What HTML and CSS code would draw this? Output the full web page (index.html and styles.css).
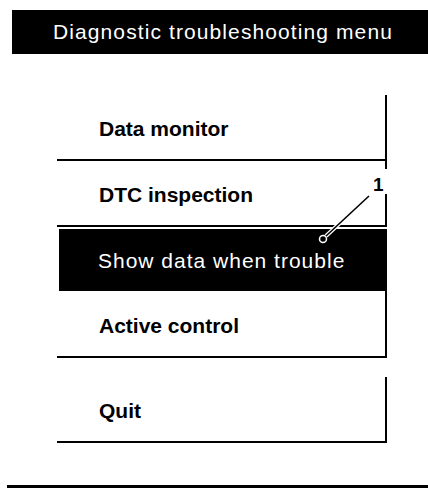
FILE: index.html
```html
<!DOCTYPE html>
<html lang="en">

<head>
  <meta charset="UTF-8">
  <meta name="viewport" content="width=device-width, initial-scale=1.0">
  <title>Diagnostic troubleshooting menu</title>
  <link rel="stylesheet" href="styles.css">
</head>

<body>
  <div class="title-bar">Diagnostic troubleshooting menu</div>

  <ul class="menu">
    <li class="item item-first">Data monitor</li>
  </ul>

  <ul class="menu menu-main">
    <li class="item item-dtc">DTC inspection</li>
    <li class="item item-selected">Show data when trouble</li>
    <li class="item">Active control</li>
  </ul>

  <ul class="menu menu-quit">
    <li class="item">Quit</li>
  </ul>

  <div class="bottom-rule"></div>

  <!-- callout 1 points at the selected row -->
  <svg class="callout" width="428" height="488" viewBox="0 0 428 488">
    <line x1="369" y1="196" x2="326" y2="236" stroke="#fff" stroke-width="4" />
    <line x1="369" y1="196" x2="326" y2="236" stroke="#000" stroke-width="1.6" />
    <circle cx="323" cy="239" r="3.5" fill="#000" stroke="#fff" stroke-width="1.5" />
    <text x="373" y="191" class="callout-num">1</text>
  </svg>
</body>

</html>
```

FILE: styles.css
```css
body {
  margin: 0;
  position: relative;
  background-color: #fff;
  color: #000;
  font-family: "Liberation Sans", Arial, sans-serif;
}

.title-bar {
  margin: 10px 0 0 12px;
  height: 44px;
  box-sizing: border-box;
  padding: 10px 0 0 41px;
  background-color: #000;
  color: #fff;
  font-size: 21px;
  line-height: 24px;
  letter-spacing: 1.1px;
}

.menu {
  list-style: none;
  margin: 41px 0 0 57px;
  padding: 0;
  width: 330px;
}

.menu-main {
  margin-top: 0;
}

.menu-quit {
  margin-top: 19px;
}

.item {
  height: 66px;
  box-sizing: border-box;
  padding: 22px 0 0 42px;
  border-bottom: 2px solid #000;
  background: linear-gradient(#000, #000) right top / 2px 100% no-repeat;
  font-size: 21px;
  font-weight: bold;
  line-height: 24px;
}

.item-dtc {
  background:
    linear-gradient(#000, #000) right top / 2px 8px no-repeat,
    linear-gradient(#000, #000) right bottom / 2px 31px no-repeat;
}

.item-selected {
  height: 62px;
  margin: 2px 0 0 2px;
  padding: 20px 0 0 39px;
  border-bottom: none;
  background: #000;
  color: #fff;
  font-weight: normal;
  letter-spacing: 1px;
}

.item-selected + .item {
  height: 67px;
  padding-top: 23px;
}

.bottom-rule {
  margin: 42px 0 0 7px;
  height: 3px;
  background-color: #000;
}

.callout {
  position: absolute;
  top: 0;
  left: 0;
  pointer-events: none;
}

.callout-num {
  font-family: "Liberation Sans", Arial, sans-serif;
  font-size: 19px;
  font-weight: bold;
  fill: #000;
}
```
